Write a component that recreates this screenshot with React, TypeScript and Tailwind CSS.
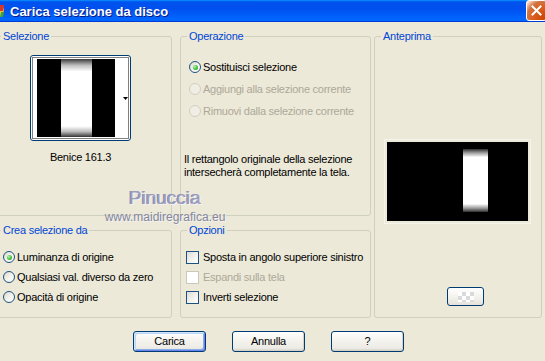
import React from 'react';

type GroupProps = { title: string; className: string; children?: React.ReactNode };

const Group = ({ title, className, children }: GroupProps) => (
  <fieldset className={`min-w-0 border border-[#D0D0BF] rounded-[3px] ${className}`}>
    <legend className="ml-[6px] px-[2px] text-[#0046D5] leading-[13px]">{title}</legend>
    {children}
  </fieldset>
);

const Radio = ({ checked, disabled }: { checked?: boolean; disabled?: boolean }) => (
  <span
    className={
      disabled
        ? 'flex shrink-0 w-[12px] h-[12px] rounded-full border border-[#D2CFC1] bg-[#EFEDE4]'
        : 'flex shrink-0 items-center justify-center w-[12px] h-[12px] rounded-full border border-[#1C5180] bg-[linear-gradient(135deg,#DCD9C9_0%,#F3F2EC_50%,#FFFFFF_100%)]'
    }
  >
    {checked && (
      <span className="w-[5px] h-[5px] rounded-full bg-[radial-gradient(circle_at_35%_35%,#B6F5AE_0%,#3FBF3A_55%,#1E951E_100%)]" />
    )}
  </span>
);

const Check = ({ disabled }: { disabled?: boolean }) => (
  <span
    className={
      disabled
        ? 'shrink-0 w-[13px] h-[13px] border border-[#CAC8BB] bg-white'
        : 'shrink-0 w-[13px] h-[13px] border border-[#1C5180] bg-[linear-gradient(135deg,#DCDCD7_0%,#F2F2EF_55%,#FFFFFF_100%)]'
    }
  />
);

const RadioRow = ({ label, checked, disabled, rowClass }: { label: string; checked?: boolean; disabled?: boolean; rowClass: string }) => (
  <div className={`flex items-center gap-[2px] ml-[8px] ${rowClass}`}>
    <Radio checked={checked} disabled={disabled} />
    <span className={disabled ? 'text-[#ACA899]' : ''}>{label}</span>
  </div>
);

const CheckRow = ({ label, disabled }: { label: string; disabled?: boolean }) => (
  <div className="flex items-center gap-[4px] ml-[5px] h-[20px]">
    <Check disabled={disabled} />
    <span className={disabled ? 'text-[#ACA899]' : ''}>{label}</span>
  </div>
);

const XpButton = ({ label, primary }: { label: string; primary?: boolean }) => (
  <button
    className={
      primary
        ? 'w-[73px] h-[21px] border border-[#003C74] rounded-[3px] bg-[linear-gradient(180deg,#FFFFFF_0%,#F4F3EE_45%,#ECEBE6_85%,#D6D0C5_100%)] shadow-[inset_1px_1px_0_#CEE7FF,inset_-1px_-1px_0_#6982EE,inset_2px_2px_0_#BCD4F6,inset_-2px_-2px_0_#89ADE4]'
        : 'w-[73px] h-[21px] border border-[#003C74] rounded-[3px] bg-[linear-gradient(180deg,#FFFFFF_0%,#F4F3EE_45%,#ECEBE6_85%,#D6D0C5_100%)] shadow-[inset_-1px_-1px_0_#D6D0C5]'
    }
  >
    {label}
  </button>
);

const TitleBar = () => (
  <div className="h-[22px] flex items-center bg-[linear-gradient(180deg,#0997FF,#0053EE_8%,#0050EE_40%,#0066FF_88%,#0066FF_93%,#005BFF_95%,#003DD7_96%,#003DD7)]">
    <svg className="ml-[-10px] shrink-0" width="16" height="16" viewBox="0 0 16 16">
      <path d="M2 3h11l1 4-2 7H4L2 7z" fill="#F3C43A" />
      <path d="M10 2h4l-1 6h-3z" fill="#D8342B" />
      <path d="M11 9h3l-1 5h-3z" fill="#3BA63B" />
    </svg>
    <span className="ml-[4px] text-white font-bold text-[13px] tracking-normal [text-shadow:1px_1px_0_#0A1883]">
      Carica selezione da disco
    </span>
    <div className="ml-auto mr-[-2px] self-start flex items-center justify-center w-[21px] h-[21px] rounded-[3px] border border-white bg-[radial-gradient(circle_at_90%_90%,#CC4600_0%,#DC6527_55%,#CD7546_70%,#FFCCB2_90%,#FFFFFF_100%)]">
      <svg width="11" height="11" viewBox="0 0 11 11">
        <path d="M1.5 1.5l8 8M9.5 1.5l-8 8" stroke="#FFFFFF" strokeWidth="2" strokeLinecap="square" />
      </svg>
    </div>
  </div>
);

const Thumb = () => (
  <div className="w-[101px] h-[86px] border border-[#003C74] rounded-[3px] bg-white p-[1px]">
    <svg width="97" height="82" viewBox="0 0 97 82">
      <defs>
        <linearGradient id="thumbBar" x1="0" y1="0" x2="0" y2="1">
          <stop offset="0" stopColor="#3A3A3A" />
          <stop offset="0.08" stopColor="#BDBDBD" />
          <stop offset="0.16" stopColor="#FFFFFF" />
          <stop offset="0.86" stopColor="#FFFFFF" />
          <stop offset="0.93" stopColor="#BDBDBD" />
          <stop offset="1" stopColor="#333333" />
        </linearGradient>
      </defs>
      <rect x="0.5" y="0.5" width="96" height="81" fill="none" stroke="#000" strokeDasharray="1 1" />
      <rect x="5" y="2" width="78" height="78" fill="#000" />
      <rect x="29" y="2" width="31" height="78" fill="url(#thumbBar)" />
      <path d="M91 40h5l-2.5 3z" fill="#000" />
    </svg>
  </div>
);

const Preview = () => (
  <div className="ml-[9px] mt-[96px] w-[147px] border border-[#F4F3EC] p-[2px]">
    <svg width="141" height="79" viewBox="0 0 141 79" className="block">
      <defs>
        <linearGradient id="prevBar" x1="0" y1="0" x2="0" y2="1">
          <stop offset="0" stopColor="#2E2E2E" />
          <stop offset="0.06" stopColor="#9A9A9A" />
          <stop offset="0.13" stopColor="#FFFFFF" />
          <stop offset="0.87" stopColor="#FFFFFF" />
          <stop offset="0.94" stopColor="#9A9A9A" />
          <stop offset="1" stopColor="#2E2E2E" />
        </linearGradient>
      </defs>
      <rect width="141" height="79" fill="#000" />
      <rect x="76" y="7" width="25" height="63" fill="url(#prevBar)" />
    </svg>
  </div>
);

export default function App() {
  return (
    <div className="relative w-[545px] h-[361px] overflow-hidden bg-[#ECE9D8] font-['Liberation_Sans',Arial,sans-serif] text-[11px] leading-[13px] tracking-[-0.25px] text-black select-none">
      <TitleBar />

      <div className="flex mt-[8px]">
        <div className="ml-[-6px] w-[178px] shrink-0 flex flex-col gap-[8px]">
          <Group title="Selezione" className="h-[186px]">
            <div className="mt-[12px] ml-[35px] w-[101px] flex flex-col items-center">
              <Thumb />
              <div className="mt-[10px]">Benice 161.3</div>
            </div>
          </Group>
          <Group title="Crea selezione da" className="h-[94px]">
            <div className="mt-[10px]">
              <RadioRow rowClass="h-[20px]" label="Luminanza di origine" checked />
              <RadioRow rowClass="h-[20px]" label="Qualsiasi val. diverso da zero" />
              <RadioRow rowClass="h-[20px]" label="Opacità di origine" />
            </div>
          </Group>
        </div>

        <div className="ml-[8px] w-[191px] shrink-0 flex flex-col gap-[8px]">
          <Group title="Operazione" className="h-[186px]">
            <div className="mt-[13px]">
              <RadioRow rowClass="h-[22px]" label="Sostituisci selezione" checked />
              <RadioRow rowClass="h-[22px]" label="Aggiungi alla selezione corrente" disabled />
              <RadioRow rowClass="h-[22px]" label="Rimuovi dalla selezione corrente" disabled />
            </div>
            <p className="mt-[31px] ml-[3px]">
              Il rettangolo originale della selezione
              <br />
              intersecherà completamente la tela.
            </p>
          </Group>
          <Group title="Opzioni" className="h-[94px]">
            <div className="mt-[10px]">
              <CheckRow label="Sposta in angolo superiore sinistro" />
              <CheckRow label="Espandi sulla tela" disabled />
              <CheckRow label="Inverti selezione" />
            </div>
          </Group>
        </div>

        <div className="ml-[3px] w-[168px] shrink-0">
          <Group title="Anteprima" className="h-[288px]">
            <Preview />
            <div className="ml-[72px] mt-[63px] w-[37px] h-[19px] flex items-center justify-center border border-[#003C74] rounded-[3px] bg-[linear-gradient(180deg,#FFFFFF_0%,#F4F3EE_50%,#E4E2DA_100%)]">
              <span className="w-[16px] h-[10px] bg-[repeating-conic-gradient(#DADADA_0%_25%,#FFFFFF_0%_50%)] [background-size:8px_8px]" />
            </div>
          </Group>
        </div>
      </div>

      <div className="flex gap-[26px] pl-[133px] mt-[13px]">
        <XpButton label="Carica" primary />
        <XpButton label="Annulla" />
        <XpButton label="?" />
      </div>

      <div className="absolute left-[100px] top-[188px] w-[130px] flex flex-col items-center pointer-events-none tracking-normal">
        <span className="text-[19px] leading-[20px] tracking-[0px] text-[#9C9EBE] [text-shadow:1px_1px_0_#F4F4F6,-1px_0_0_#8588A8]">
          Pinuccia
        </span>
        <span className="mt-[2px] text-[12px] leading-[14px] text-[#85879C] [text-shadow:1px_1px_0_#F2F2F4]">
          www.maidiregrafica.eu
        </span>
      </div>
    </div>
  );
}
